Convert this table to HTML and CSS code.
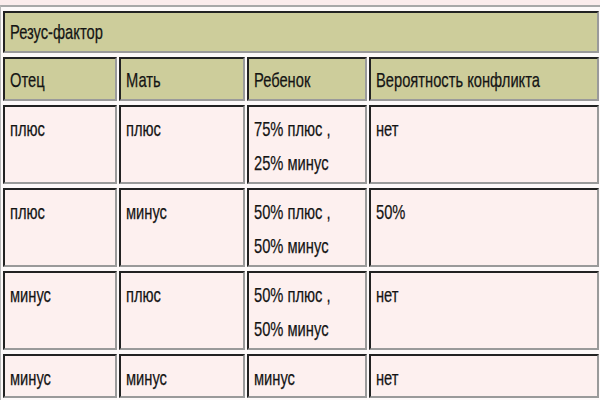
FILE: index.html
```html
<!DOCTYPE html>
<html lang="ru">
<head>
<meta charset="utf-8">
<title>Резус-фактор</title>
<link rel="stylesheet" href="styles.css">
</head>
<body>
<table class="rh">
  <colgroup>
    <col class="c1"><col class="c2"><col class="c3"><col class="c4">
  </colgroup>
  <tr class="cap-row"><td class="head cap" colspan="4"><span class="t">Резус-фактор</span></td></tr>
  <tr class="head-row">
    <td class="head"><span class="t">Отец</span></td>
    <td class="head"><span class="t">Мать</span></td>
    <td class="head"><span class="t">Ребенок</span></td>
    <td class="head"><span class="t">Вероятность конфликта</span></td>
  </tr>
  <tr class="data-row">
    <td><span class="t">плюс</span></td>
    <td><span class="t">плюс</span></td>
    <td><span class="t">75% плюс ,<br>25% минус</span></td>
    <td><span class="t">нет</span></td>
  </tr>
  <tr class="data-row">
    <td><span class="t">плюс</span></td>
    <td><span class="t">минус</span></td>
    <td><span class="t">50% плюс ,<br>50% минус</span></td>
    <td><span class="t">50%</span></td>
  </tr>
  <tr class="data-row">
    <td><span class="t">минус</span></td>
    <td><span class="t">плюс</span></td>
    <td><span class="t">50% плюс ,<br>50% минус</span></td>
    <td><span class="t">нет</span></td>
  </tr>
  <tr class="last-row">
    <td><span class="t">минус</span></td>
    <td><span class="t">минус</span></td>
    <td><span class="t">минус</span></td>
    <td><span class="t">нет</span></td>
  </tr>
</table>
</body>
</html>
```

FILE: styles.css
```css
html, body {
  margin: 0;
  padding: 0;
  height: 400px;
  background: #fbecec;
  overflow: hidden;
}

.rh {
  margin-top: 5px;
  table-layout: fixed;
  width: 600px;
  border-collapse: separate;
  border-spacing: 2px 4px;
  border-top: 2px solid #a8a8a8;
  border-left: 1px solid #b8b8b8;
  background: #fdf9f9;
  font-family: "Liberation Sans", Arial, sans-serif;
  font-size: 21px;
  line-height: 34px;
  color: #141414;
}

.c1 { width: 114px; }
.c2 { width: 126px; }
.c3 { width: 120px; }
.c4 { width: 230px; }

.rh td {
  box-sizing: border-box;
  vertical-align: top;
  padding: 5px 4px 0 5px;
  border-style: solid;
  border-width: 2px;
  border-color: #222 #9a9a9a #9a9a9a #222;
  background: #fdf0ef;
  white-space: nowrap;
  overflow: hidden;
}

.t {
  display: inline-block;
  transform: scaleX(0.7);
  transform-origin: left top;
  -webkit-text-stroke: 0.25px #141414;
}

.rh td.head {
  background: #cdcd9b;
  padding-top: 4px;
}

.rh td.cap {
  padding-top: 2px;
}

.cap-row { height: 42px; }
.head-row { height: 44px; }
.data-row { height: 79px; }
.last-row { height: 44px; }
```
